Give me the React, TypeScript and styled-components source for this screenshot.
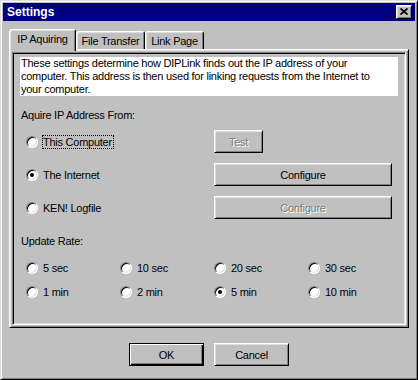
import React from 'react';
import styled, { createGlobalStyle } from 'styled-components';

const GlobalStyle = createGlobalStyle`
  html, body { margin: 0; padding: 0; background: #c0c0c0; }
  body {
    font-family: "Liberation Sans", Arial, sans-serif;
    font-size: 11px;
    letter-spacing: -0.25px;
    color: #000;
  }
  * { box-sizing: border-box; }
`;

const Window = styled.div`
  width: 418px;
  height: 380px;
  background: #c0c0c0;
  border: 1px solid;
  border-color: #dfdfdf #000 #000 #dfdfdf;
  box-shadow: inset 1px 1px #fff, inset -1px -1px #808080;
  padding: 2px;
  display: flex;
  flex-direction: column;
`;

const TitleBar = styled.div`
  height: 18px;
  flex: none;
  background: #000080;
  color: #fff;
  font-weight: bold;
  font-size: 12px;
  letter-spacing: 0;
  display: flex;
  align-items: center;
  justify-content: space-between;
  padding: 0 3px 0 4px;
`;

const CloseButton = styled.div`
  width: 16px;
  height: 14px;
  background: #c0c0c0;
  border: 1px solid;
  border-color: #fff #000 #000 #fff;
  box-shadow: inset 1px 1px #dfdfdf, inset -1px -1px #808080;
  display: flex;
  align-items: center;
  justify-content: center;
  padding-bottom: 1px;
`;

const Body = styled.div`
  flex: 1;
  display: flex;
  flex-direction: column;
  padding: 8px 6px 0;
`;

const TabStrip = styled.div`
  height: 20px;
  flex: none;
  display: flex;
  align-items: flex-end;
`;

const Tab = styled.div<{ $selected?: boolean; $w: number }>`
  width: ${p => p.$w}px;
  height: ${p => (p.$selected ? 22 : 18)}px;
  margin-bottom: ${p => (p.$selected ? -2 : 0)}px;
  position: ${p => (p.$selected ? 'relative' : 'static')};
  z-index: ${p => (p.$selected ? 1 : 'auto')};
  background: #c0c0c0;
  border: 1px solid;
  border-color: #fff #000 transparent #fff;
  border-bottom: none;
  border-radius: 3px 3px 0 0;
  box-shadow: inset 1px 1px #dfdfdf, inset -1px 0 #808080;
  display: flex;
  align-items: center;
  justify-content: center;
  padding-bottom: ${p => (p.$selected ? 3 : 0)}px;
  white-space: nowrap;
`;

const Panel = styled.div`
  height: 279px;
  flex: none;
  background: #c0c0c0;
  border: 1px solid;
  border-color: #fff #000 #000 #fff;
  box-shadow: inset 1px 1px #dfdfdf, inset -1px -1px #808080;
  padding: 2px;
  display: flex;
`;

const Frame = styled.div`
  flex: 1;
  border: 1px solid;
  border-color: #808080 #fff #fff #808080;
  box-shadow: inset 1px 1px #000, inset -1px -1px #dfdfdf;
  padding: 1px;
  display: flex;
  flex-direction: column;
`;

const Description = styled.div`
  margin: 3px 6px 0;
  height: 39px;
  background: #fff;
  padding-left: 1px;
  line-height: 13px;
  white-space: nowrap;
`;

const SectionLabel = styled.div<{ $top: number }>`
  margin: ${p => p.$top}px 0 0 7px;
  line-height: 13px;
`;

const AcquireList = styled.div`
  margin-top: 8px;
  padding-left: 12px;
  display: flex;
  flex-direction: column;
  gap: 10px;
`;

const AcquireRow = styled.div`
  height: 23px;
  display: flex;
  align-items: center;
`;

const RadioItem = styled.div<{ $w?: number }>`
  width: ${p => (p.$w ? `${p.$w}px` : 'auto')};
  display: flex;
  align-items: center;
  flex: none;
`;

const RadioCircle = styled.span<{ $checked?: boolean }>`
  width: 12px;
  height: 12px;
  flex: none;
  border-radius: 50%;
  background: #fff;
  border: 1px solid;
  border-color: #808080 #fff #fff #808080;
  box-shadow: inset 1px 1px #000, inset -1px -1px #dfdfdf;
  display: flex;
  align-items: center;
  justify-content: center;
  &::after {
    content: '';
    width: 4px;
    height: 4px;
    border-radius: 50%;
    background: ${p => (p.$checked ? '#000' : 'transparent')};
  }
`;

const RadioText = styled.span<{ $focused?: boolean }>`
  margin-left: 4px;
  line-height: 12px;
  border: 1px ${p => (p.$focused ? 'dotted #000' : 'solid transparent')};
  padding: 0 1px 0 0;
  white-space: nowrap;
`;

const Button = styled.div<{ $w: number; $disabled?: boolean; $default?: boolean }>`
  width: ${p => p.$w}px;
  height: 23px;
  flex: none;
  background: #c0c0c0;
  border: 1px solid;
  border-color: ${p => (p.$default ? '#000' : '#fff #000 #000 #fff')};
  box-shadow: ${p =>
    p.$default
      ? 'inset 1px 1px #fff, inset -1px -1px #000, inset -2px -2px #808080'
      : 'inset 1px 1px #dfdfdf, inset -1px -1px #808080'};
  display: flex;
  align-items: center;
  justify-content: center;
  color: ${p => (p.$disabled ? '#808080' : '#000')};
  text-shadow: ${p => (p.$disabled ? '1px 1px #fff' : 'none')};
`;

const RateGrid = styled.div`
  margin-top: 12px;
  padding-left: 12px;
  display: grid;
  grid-template-columns: repeat(4, 94px);
  grid-auto-rows: 16px;
  row-gap: 8px;
`;

const Footer = styled.div`
  margin-top: 15px;
  display: flex;
  justify-content: center;
  gap: 10px;
`;

const Radio: React.FC<{ label: string; checked?: boolean; focused?: boolean; w?: number }> = ({
  label,
  checked,
  focused,
  w,
}) => (
  <RadioItem $w={w}>
    <RadioCircle $checked={checked} />
    <RadioText $focused={focused}>{label}</RadioText>
  </RadioItem>
);

const rates = ['5 sec', '10 sec', '20 sec', '30 sec', '1 min', '2 min', '5 min', '10 min'];

export default function App() {
  return (
    <>
      <GlobalStyle />
      <Window>
        <TitleBar>
          <span>Settings</span>
          <CloseButton>
            <svg width="8" height="7" viewBox="0 0 8 7">
              <path d="M0.5 0.5 L7.5 6.5 M7.5 0.5 L0.5 6.5" stroke="#000" strokeWidth="1.7" />
            </svg>
          </CloseButton>
        </TitleBar>
        <Body>
          <TabStrip>
            <Tab $selected $w={67}>IP Aquiring</Tab>
            <Tab $w={69}>File Transfer</Tab>
            <Tab $w={59}>Link Page</Tab>
          </TabStrip>
          <Panel>
            <Frame>
              <Description>
                These settings determine how DIPLink finds out the IP address of your
                <br />
                computer. This address is then used for linking requests from the Internet to
                <br />
                your computer.
              </Description>
              <SectionLabel $top={13}>Aquire IP Address From:</SectionLabel>
              <AcquireList>
                <AcquireRow>
                  <Radio w={188} label="This Computer" focused />
                  <Button $w={49} $disabled>Test</Button>
                </AcquireRow>
                <AcquireRow>
                  <Radio w={188} label="The Internet" checked />
                  <Button $w={178}>Configure</Button>
                </AcquireRow>
                <AcquireRow>
                  <Radio w={188} label="KEN! Logfile" />
                  <Button $w={178} $disabled>Configure</Button>
                </AcquireRow>
              </AcquireList>
              <SectionLabel $top={16}>Update Rate:</SectionLabel>
              <RateGrid>
                {rates.map(r => (
                  <Radio key={r} label={r} checked={r === '5 min'} />
                ))}
              </RateGrid>
            </Frame>
          </Panel>
          <Footer>
            <Button $w={75} $default>OK</Button>
            <Button $w={75}>Cancel</Button>
          </Footer>
        </Body>
      </Window>
    </>
  );
}
